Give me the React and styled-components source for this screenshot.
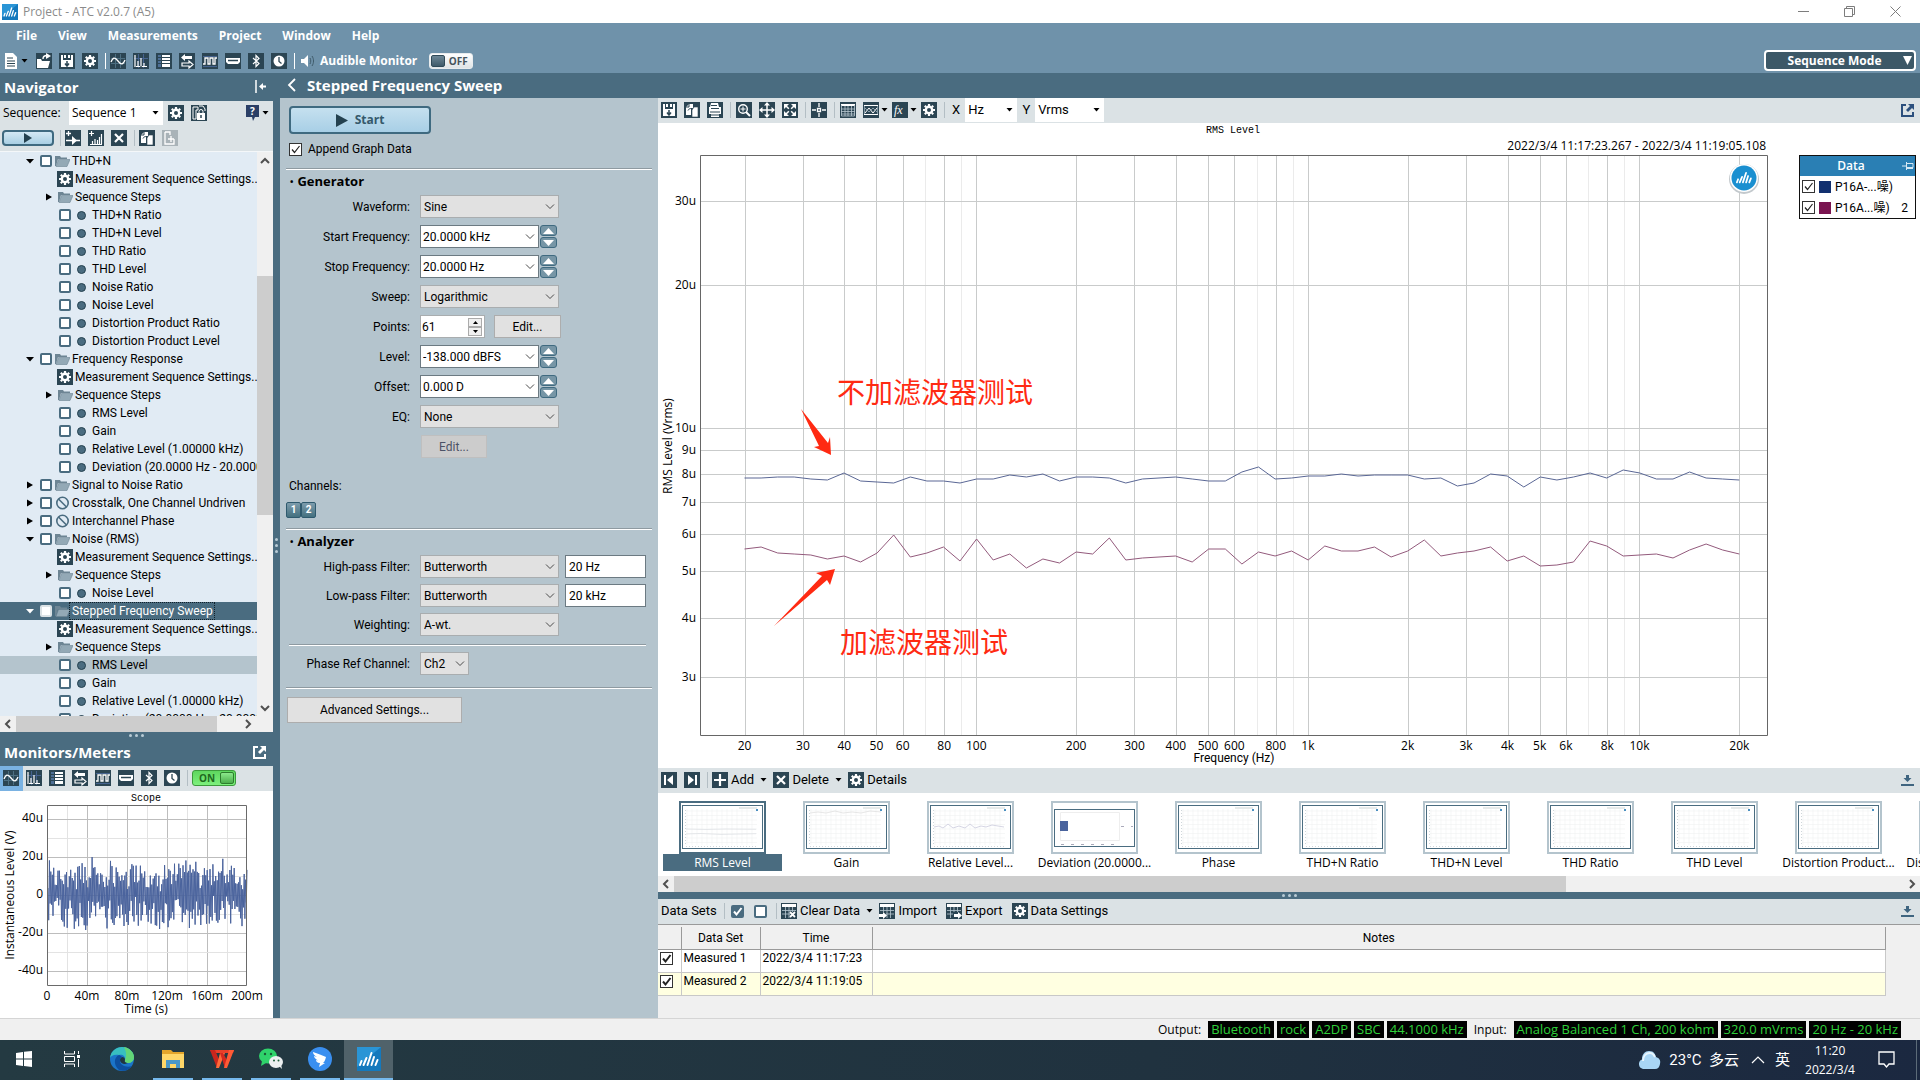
import React, { useState } from "react";
import styled, { createGlobalStyle } from "styled-components";

const GlobalStyle = createGlobalStyle`
  * {
    box-sizing: border-box;
  }
  body {
    margin: 0;
    background: #f0f0f0;
    color: #000;
    font-family: "Open Sans", "Noto Sans CJK SC", sans-serif;
    font-size: 12px;
    line-height: 16px;
  }
  button, input, select {
    font: inherit;
    color: inherit;
    margin: 0;
    padding: 0;
    border: 0;
    border-radius: 0;
    background: none;
  }
`;

const narrow = `Roboto, "Noto Sans CJK SC", sans-serif`;

/* ---------- data ---------- */

const settings = { kind: "settings", text: "Measurement Sequence Settings.." };
const steps = { kind: "steps", text: "Sequence Steps" };
const item = (text, extra) => ({ kind: "item", text, ...extra });
const group = (text, extra) => ({ kind: "group", open: true, text, ...extra });

const treeRows = [
  group("THD+N"),
  settings,
  steps,
  item("THD+N Ratio"),
  item("THD+N Level"),
  item("THD Ratio"),
  item("THD Level"),
  item("Noise Ratio"),
  item("Noise Level"),
  item("Distortion Product Ratio"),
  item("Distortion Product Level"),
  group("Frequency Response"),
  settings,
  steps,
  item("RMS Level"),
  item("Gain"),
  item("Relative Level (1.00000 kHz)"),
  item("Deviation (20.0000 Hz - 20.0000"),
  group("Signal to Noise Ratio", { open: false }),
  group("Crosstalk, One Channel Undriven", { open: false, blocked: true }),
  group("Interchannel Phase", { open: false, blocked: true }),
  group("Noise (RMS)"),
  settings,
  steps,
  item("Noise Level"),
  group("Stepped Frequency Sweep", { active: true }),
  settings,
  steps,
  item("RMS Level", { current: true }),
  item("Gain"),
  item("Relative Level (1.00000 kHz)"),
  item("Deviation (20.0000 Hz - 20.0000"),
];

const monitorIcons = [
  ["scope", "Scope"],
  ["fft", "FFT"],
  ["list", "Meters"],
  ["swap", "Signal routing"],
  ["digital", "Digital"],
  ["hdmi", "HDMI"],
  ["bluetooth", "Bluetooth"],
  ["clock", "Clock"],
];

const thumbs = [
  { text: "RMS Level", lines: true, selected: true },
  { text: "Gain", top: true },
  { text: "Relative Level...", mid: true },
  { text: "Deviation (20.0000...", bar: true },
  { text: "Phase" },
  { text: "THD+N Ratio" },
  { text: "THD+N Level" },
  { text: "THD Ratio" },
  { text: "THD Level" },
  { text: "Distortion Product..." },
  { text: "Distortion Product..." },
];

const unfiltered = [
  355, 355, 354, 354, 356, 357, 350, 358, 359, 360, 354, 358, 358, 360, 356, 356,
  352, 354, 351, 358, 354, 354, 355, 360, 356, 355, 354, 356, 358, 358, 349, 344,
  356, 355, 353, 353, 351, 353, 352, 352, 352, 356, 355, 363, 360, 351, 353, 364,
  354, 357, 354, 350, 355, 347, 350, 356, 356, 349, 355, 356, 357,
];
const filtered = [
  426, 424, 430, 431, 432, 436, 433, 439, 430, 412, 434, 430, 424, 438, 416, 437,
  431, 445, 436, 440, 429, 431, 415, 437, 435, 434, 433, 439, 426, 426, 441, 429,
  433, 428, 437, 423, 428, 428, 424, 434, 428, 417, 433, 430, 428, 424, 438, 433,
  443, 442, 439, 418, 423, 433, 432, 431, 435, 427, 421, 427, 431,
];

/* ---------- icons ---------- */

const S = (props) => (
  <g fill="none" stroke="#fff" strokeWidth="1.4" {...props} />
);

const glyphs = {
  file: (
    <>
      <path d="M2 0h8l4 4v12H2z" fill="#fff" />
      <path d="M4 5h6M4 8h8M4 10.500h8M4 13h8" stroke="#2b4553" />
    </>
  ),
  open: (
    <>
      <path d="M1 6h4l1 2h8l-2 7H1z" fill="#fff" />
      <S>
        <path d="M7 6c0-2 1-3.500 4-3.500" />
      </S>
      <path d="M10 0l5 3-5 3z" fill="#fff" />
    </>
  ),
  save: (
    <>
      <path d="M2 2h2v5h8V2h2v12H2z" fill="#fff" />
      <path d="M5 2h2v3H5zM9 2h2v3H9z" fill="#fff" />
      <path d="M8 8v4M6 10.500l2 2.500 2-2.500" stroke="#2b4553" strokeWidth="1.500" fill="none" />
    </>
  ),
  gear: (
    <>
      <circle cx="8" cy="8" r="3.200" fill="none" stroke="#fff" strokeWidth="2.400" />
      <path
        d="M8 2v2M8 12v2M2 8h2M12 8h2M3.800 3.800l1.400 1.400M10.800 10.800l1.400 1.400M3.800 12.200l1.400-1.400M10.800 5.200l1.400-1.400"
        stroke="#fff"
        strokeWidth="2.200"
      />
    </>
  ),
  scope: (
    <>
      <path d="M5.500 1v14M10.500 1v14M1 5.500h14M1 10.500h14" stroke="#4d6f82" />
      <S strokeWidth="1.300">
        <path d="M1 9c2-5 4-5 7-1s5 4 7-1" />
      </S>
    </>
  ),
  fft: (
    <>
      <path d="M5.500 1v14M10.500 1v14M1 5.500h14" stroke="#45638f" />
      <S strokeWidth="1.200">
        <path d="M2 2v12M3 13.500h2V8v5.500h2M8 13.500V5M9 13.500h2V10v3.500h3" />
      </S>
    </>
  ),
  list: (
    <>
      <path d="M2 2h3v2H2zM2 5h3v2H2zM2 8h3v2H2zM2 11h3v3H2z" fill="#4d6f96" />
      <path d="M6 2h8v2H6zM6 5h8v2H6zM6 8h8v2H6zM6 11h8v3H6z" fill="#fff" />
    </>
  ),
  swap: (
    <>
      <path d="M6 1v2h7v3H6v2L2 4.500z" fill="#fff" />
      <S strokeWidth="1.200">
        <path d="M3 10h7V8l4 3.500L10 15v-2H3z" />
      </S>
    </>
  ),
  digital: (
    <>
      <path d="M1 3.500h14M1 13.500h14" stroke="#45638f" />
      <S strokeWidth="1.300">
        <path d="M1 11h2V5h3v6h2V5h3v6h2V5h2" />
      </S>
    </>
  ),
  hdmi: (
    <>
      <path d="M1 5h14v4l-2 2H3L1 9z" fill="#fff" />
      <path d="M3 7.500h10" stroke="#2b4553" strokeWidth="1.500" />
    </>
  ),
  bluetooth: (
    <S strokeWidth="1.200">
      <path d="M5 5l6 5.500L8 13.500V2.500l3 3L5 11" />
    </S>
  ),
  clock: (
    <>
      <circle cx="8" cy="8" r="5.500" fill="#fff" />
      <path d="M8 4v4.500l2.500 2" stroke="#2b4553" strokeWidth="1.300" fill="none" />
    </>
  ),
  lock: (
    <>
      <path d="M2 2h5v3H5v9H2zM8 1h4l2 3v2" fill="none" stroke="#fff" />
      <path d="M6 8h8v7H6z" fill="#fff" />
      <path d="M8 8V6.500a2 2 0 014 0V8" fill="none" stroke="#fff" />
      <path d="M10 10v3" stroke="#2b4553" strokeWidth="1.500" />
    </>
  ),
  addStep: (
    <>
      <path d="M3.500 1v5M1 3.500h5M1 10.500h14" stroke="#fff" strokeWidth="1.300" />
      <path d="M7 6l5 4.500L7 15z" fill="#fff" />
    </>
  ),
  addMeter: (
    <path
      d="M3.500 1v5M1 3.500h5M2 14.500h12M4.500 14v-3M7 14V9M9.500 14v-4M11.500 14V7M13.500 14V4"
      stroke="#fff"
      strokeWidth="1.200"
    />
  ),
  close: <path d="M4 4l8 8M12 4l-8 8" stroke="#fff" strokeWidth="2.200" />,
  copy: (
    <>
      <path d="M2 5l3-3h4v4H7v7H2z" fill="#fff" />
      <path d="M8 8l2-3h4v10H8z" fill="#fff" stroke="#2b4553" strokeWidth=".6" />
      <path d="M5 2v3H2M4 8.500c1-2 2-2 4-2" fill="none" stroke="#2b4553" />
    </>
  ),
  newDoc: (
    <path d="M3 2h5v3M3 2v12h9V9M9 6v6M6 9h6" fill="none" stroke="#fff" strokeWidth="1.300" />
  ),
  print: (
    <>
      <path d="M4 1h7l1 4h2v7H2V5h1z" fill="#fff" />
      <path d="M4 6.500h8M3 10h10M4 3.500h6" stroke="#2b4553" />
      <path d="M4 11h8v4H4z" fill="#fff" />
      <path d="M3 13h10" stroke="#2b4553" />
    </>
  ),
  zoomIn: (
    <>
      <S>
        <circle cx="7" cy="7" r="4.300" />
        <path d="M10 10l4 4" strokeWidth="2" />
        <path d="M7 4.500v5M4.500 7h5" strokeWidth="1" />
      </S>
    </>
  ),
  move: (
    <>
      <path d="M8 2v12M2 8h12" stroke="#fff" strokeWidth="1.500" />
      <path d="M8 0l3 3.500H5zM8 16l3-3.500H5zM0 8l3.500-3v6zM16 8l-3.500-3v6z" fill="#fff" />
    </>
  ),
  expand: (
    <>
      <path d="M4 4l8 8M12 4l-8 8" stroke="#fff" strokeWidth="1.500" strokeDasharray="4 3.300" />
      <path d="M2 2h5L2 7zM14 2v5L9 2zM2 14V9l5 5zM14 14H9l5-5z" fill="#fff" />
    </>
  ),
  cursor: (
    <path d="M8 1v4M8 11v4M1 8h4M11 8h4M6.500 6.500h3v3h-3z" fill="none" stroke="#fff" strokeWidth="1.300" />
  ),
  table: (
    <>
      <path d="M1 2h14v2H1z" fill="#fff" />
      <path d="M1.500 3v11h13V3M5 4v10M8 4v10M11.500 4v10M1 7h14M1 9.500h14M1 12h14" fill="none" stroke="#b9c8d0" strokeWidth=".8" />
    </>
  ),
  wave: (
    <>
      <path d="M1.500 3v10M14.500 3v10" stroke="#7f96a3" />
      <path d="M1 3.500h14M1 12.500h14" stroke="#fff" />
      <path d="M2 11l4-5 4 5 4-5" fill="none" stroke="#fff" />
      <path d="M2 6l4 4 4-4 4 4" fill="none" stroke="#9fb2bc" strokeWidth=".8" />
    </>
  ),
  fx: (
    <text x="2" y="12" fill="#fff" fontSize="12" fontStyle="italic" fontFamily="Liberation Serif, serif">
      fx
    </text>
  ),
  first: (
    <>
      <path d="M4 3v10" stroke="#fff" strokeWidth="2" />
      <path d="M12 3v10L6 8z" fill="#fff" />
    </>
  ),
  last: (
    <>
      <path d="M12 3v10" stroke="#fff" strokeWidth="2" />
      <path d="M4 3v10l6-5z" fill="#fff" />
    </>
  ),
  plus: <path d="M8 2v12M2 8h12" stroke="#fff" strokeWidth="2.200" />,
  clearData: (
    <>
      <path d="M1 1h14v3H1z" fill="#fff" />
      <path d="M4.500 4v11M8 4v11M11.500 4v5M1 7.500h14M1 11h8" stroke="#b9c8d0" strokeWidth=".8" />
      <path d="M9 9l5 5M14 9l-5 5" stroke="#fff" strokeWidth="1.800" />
    </>
  ),
  importData: (
    <>
      <path d="M1 1h14v3H1z" fill="#fff" />
      <path d="M4.500 4v5M8 4v11M11.500 4v11M1 7.500h14M7 11h8" stroke="#b9c8d0" strokeWidth=".8" />
      <path d="M0 11h4V9l4 3.500L4 16v-2H0z" fill="#fff" />
    </>
  ),
  exportData: (
    <>
      <path d="M1 1h14v3H1z" fill="#fff" />
      <path d="M4.500 4v11M8 4v5M11.500 4v5M1 7.500h14M1 11h6" stroke="#b9c8d0" strokeWidth=".8" />
      <path d="M8 11h4V9l4 3.500-4 3.500v-2H8z" fill="#fff" />
    </>
  ),
};

const Tile = styled.svg`
  display: block;
  flex: none;
  width: 16px;
  height: 16px;
  background: ${(p) => (p.$plain ? "none" : p.$off ? "#a9b3b8" : "#2b4553")};
`;

const Icon = ({ name, plain, off }) => (
  <Tile viewBox="0 0 16 16" $plain={plain} $off={off} aria-hidden="true">
    {glyphs[name]}
  </Tile>
);

const CaretSvg = styled.svg`
  display: block;
  flex: none;
  width: 7px;
  height: 4px;
`;
const Caret = () => (
  <CaretSvg viewBox="0 0 7 4" aria-hidden="true">
    <path d="M.5 0h6l-3 3.500z" />
  </CaretSvg>
);

const LogoSvg = styled.svg`
  display: block;
  flex: none;
  width: ${(p) => p.$size}px;
  height: ${(p) => p.$size}px;
`;
const bars = "M3 18l1.500-4M6.500 18l3-7M10.500 18l4-12M14.500 18l2.500-8M18.500 18l2-5";
const AppLogo = ({ size }) => (
  <LogoSvg viewBox="0 0 24 24" $size={size} aria-hidden="true">
    <rect width="24" height="24" fill="#1479bd" />
    <path d="M0 0h24L0 20z" fill="#2a95d6" />
    <path d={bars} stroke="#fff" strokeWidth="2" strokeLinecap="round" />
  </LogoSvg>
);

const PopSvg = styled.svg`
  display: block;
  width: 13px;
  height: 13px;
`;
const PopOut = ({ color }) => (
  <PopSvg viewBox="0 0 13 13" aria-hidden="true">
    <path d="M5 1H1v11h11V8" fill="none" stroke={color} strokeWidth="2" />
    <path d="M7 0h6v6l-2-2-4 4-2-2 4-4z" fill={color} />
  </PopSvg>
);
const Dock = () => (
  <PopSvg viewBox="0 0 13 13" aria-hidden="true">
    <path d="M0 10h13v2H0zM5 1h3v3h2.500L6.500 8 2.500 4H5z" fill="#3f6580" />
  </PopSvg>
);

/* ---------- shared parts ---------- */

const Page = styled.div`
  display: flex;
  flex-direction: column;
  height: 100vh;
  min-width: 1280px;
  min-height: 900px;
`;

const TitleBar = styled.header`
  display: flex;
  align-items: center;
  height: 23px;
  padding: 0 2px;
  background: #fff;
  color: #8b8b8b;
`;

const TitleText = styled.h1`
  flex: 1;
  margin: 0 0 0 5px;
  font-size: 12px;
  font-weight: 400;
`;

const WindowButton = styled.button`
  display: grid;
  place-items: center;
  width: 46px;
  height: 22px;
  svg {
    width: 11px;
    height: 11px;
    fill: none;
    stroke: #7d7d7d;
  }
`;

const TopBar = styled.div`
  display: flex;
  align-items: flex-end;
  justify-content: space-between;
  background: #6f92aa;
  padding-right: 4px;
`;

const MenuRow = styled.nav`
  display: flex;
  align-items: center;
  height: 26px;
  padding-left: 16px;
  gap: 21px;
  color: #fff;
  font-weight: 700;
`;

const Toolbar = styled.div`
  display: flex;
  align-items: center;
  height: ${(p) => (p.$top ? 24 : 25)}px;
  flex: none;
  padding: 0 0 1px 3px;
  background: ${(p) => (p.$top ? "none" : "#dbe2e5")};
  font-family: ${(p) => (p.$large ? narrow : "inherit")};
  font-size: ${(p) => (p.$large ? 13 : 12)}px;
`;

const Tool = styled.button`
  display: flex;
  align-items: center;
  height: ${(p) => (p.$lit ? 25 : 16)}px;
  gap: ${(p) => (p.$text ? 3 : 2)}px;
  padding-right: ${(p) => p.$pad || 7}px;
  background: ${(p) => (p.$lit ? "#7ab2e2" : "none")};
  margin-left: ${(p) => (p.$lit ? "-3px" : 0)};
  padding-left: ${(p) => (p.$lit ? "3px" : 0)};
  margin-right: ${(p) => (p.$lit ? "3px" : 0)};
  white-space: nowrap;
`;

const Sep = styled.span`
  width: ${(p) => (p.$wide ? 6 : 5)}px;
  height: 16px;
  border-left: 1px solid ${(p) => (p.$light ? "#fff" : "#b3bec4")};
`;

const Spacer = styled.div`
  flex: 1;
`;

const PanelHead = styled.div`
  display: flex;
  align-items: center;
  flex: none;
  height: ${(p) => p.$h || 25}px;
  padding: 0 7px 1px ${(p) => p.$left || 4}px;
  gap: 11px;
  background: #4a6c80;
  color: #fff;
`;

const PanelTitle = styled.h2`
  flex: 1;
  margin: 0;
  font-size: 15px;
  font-weight: 700;
  white-space: nowrap;
`;

const Toggle = styled.button`
  display: flex;
  align-items: center;
  width: 44px;
  height: 16px;
  padding: 1px;
  border: 1px solid ${(p) => (p.$on ? "#3c9a3c" : "#e8ecee")};
  border-radius: 3px;
  flex-direction: ${(p) => (p.$on ? "row-reverse" : "row")};
  background: ${(p) =>
    p.$on ? "linear-gradient(#5ed65e, #7df07d)" : "linear-gradient(#fff, #dfe4e6)"};
  color: ${(p) => (p.$on ? "#1e6a1e" : "#46545c")};
  font-size: 10px;
  font-weight: 700;
  line-height: 12px;
  span {
    flex: 1;
  }
  i {
    width: 14px;
    height: 12px;
    border-radius: 2px;
    border: 1px solid ${(p) => (p.$on ? "#2e7d2e" : "#2f4a58")};
    background: ${(p) =>
      p.$on ? "linear-gradient(#8be88b, #4caf4c)" : "linear-gradient(#6d8797, #3f5b6a)"};
  }
`;

const ModeButton = styled.button`
  display: flex;
  align-items: center;
  width: 152px;
  height: 21px;
  margin-bottom: 2px;
  border: 2px solid #fff;
  border-radius: 4px;
  background: #3c5867;
  color: #fff;
  font-weight: 700;
  span {
    flex: 1;
  }
  svg {
    width: 9px;
    height: 9px;
    margin-right: 2px;
    fill: #fff;
  }
`;

const SelectWrap = styled.div`
  display: grid;
  align-items: center;
  width: ${(p) => p.$w || 139}px;
  height: ${(p) => (p.$flat ? 24 : 23)}px;
  background: ${(p) => (p.$flat ? "#fff" : "#e1e1e1")};
  border: ${(p) => (p.$flat ? "0" : "1px solid #a9adaf")};
  > * {
    grid-area: 1 / 1;
  }
  > svg {
    justify-self: end;
    margin-right: ${(p) => (p.$flat ? 4 : 3)}px;
    pointer-events: none;
  }
`;

const SelectBox = styled.select`
  appearance: none;
  width: 100%;
  height: 100%;
  padding-left: 3px;
  line-height: 20px;
`;

const ChevronSvg = styled.svg`
  display: block;
  flex: none;
  width: 10px;
  height: 6px;
  fill: none;
  stroke: #4a4a4a;
`;
const Chevron = () => (
  <ChevronSvg viewBox="0 0 10 6" aria-hidden="true">
    <path d="M1 .5l4 4 4-4" />
  </ChevronSvg>
);

const Select = ({ id, value, width, flat, label }) => (
  <SelectWrap $w={width} $flat={flat}>
    <SelectBox id={id} aria-label={label} defaultValue={value}>
      <option>{value}</option>
    </SelectBox>
    {flat ? <Caret /> : <Chevron />}
  </SelectWrap>
);

/* ---------- navigator ---------- */

const Main = styled.main`
  display: grid;
  grid-template-columns: 273px 7px minmax(0, 1fr);
  flex: 1;
  min-height: 0;
`;

const Side = styled.aside`
  display: flex;
  flex-direction: column;
  min-height: 0;
`;

const Splitter = styled.div`
  display: flex;
  flex: none;
  flex-direction: ${(p) => (p.$row ? "row" : "column")};
  align-items: center;
  justify-content: center;
  gap: 3px;
  min-height: 7px;
  background: #4a6c80;
  i {
    width: 3px;
    height: 3px;
    border-radius: 50%;
    background: #b9cbd5;
  }
`;
const Dots = ({ row }) => (
  <Splitter $row={row}>
    <i />
    <i />
    <i />
  </Splitter>
);

const SequenceLabel = styled.label`
  width: 66px;
`;

const RunButton = styled.button`
  display: grid;
  place-items: center;
  width: 52px;
  height: 16px;
  margin: 0 6px 0 -1px;
  border: 2px solid #3f6a80;
  border-radius: 4px;
  background: linear-gradient(#d3e8f4, #a9cfe3);
  svg {
    width: 8px;
    height: 10px;
    fill: #24414f;
  }
`;

const TreeArea = styled.div`
  display: grid;
  grid-template-columns: minmax(0, 1fr) 16px;
  flex: 1;
  min-height: 0;
  overflow: hidden;
  border-top: 1px solid #f4f7f9;
  background: #e1ebf4;
  font-family: ${narrow};
`;

const Tree = styled.ul`
  margin: 0;
  padding: 0;
  list-style: none;
  overflow: hidden;
  min-height: 0;
`;

const TreeRow = styled.li`
  display: flex;
  align-items: center;
  height: 18px;
  padding-left: ${(p) => ({ group: 26, settings: 57, steps: 45, item: 59 })[p.$kind]}px;
  background: ${(p) => (p.$active ? "#4a6c80" : p.$current ? "#b4c4cd" : "none")};
  color: ${(p) => (p.$active ? "#fff" : "#000")};
  white-space: nowrap;
  label {
    padding: 0 1px 0 2px;
    outline: ${(p) => (p.$active ? "1px dotted #10202a" : "none")};
  }
  input {
    margin-right: 3px;
  }
`;

const Box = styled.input`
  appearance: none;
  flex: none;
  width: 12px;
  height: 12px;
  border: 2px solid ${(p) => (p.$active ? "#dbe2e5" : "#4a6c80")};
  border-radius: 2px;
  background: #fff;
`;

const Twisty = styled.svg`
  flex: none;
  width: 8px;
  height: 8px;
  margin-right: ${(p) => (p.$step ? 5 : 6)}px;
  fill: ${(p) => (p.$active ? "#fff" : "#000")};
`;

const TreeGlyph = styled.svg`
  flex: none;
  width: 15px;
  height: 14px;
`;

const Dot = styled.i`
  flex: none;
  width: 9px;
  height: 9px;
  margin: 0 4px 0 3px;
  border: 1px solid #24414f;
  border-radius: 50%;
  background: #4a6c80;
`;

const PlainLabel = styled.span`
  padding-left: 2px;
`;

const Folder = () => (
  <TreeGlyph viewBox="0 0 15 14" aria-hidden="true">
    <path d="M0 2h5l1 1.500h6V5H3L1 12H0z" fill="#6d8594" />
    <path d="M3.500 5.500H15L12 12.500H1z" fill="#93a9b6" stroke="#6d8594" strokeWidth=".6" />
  </TreeGlyph>
);

const Blocked = () => (
  <TreeGlyph viewBox="0 0 15 14" aria-hidden="true">
    <circle cx="7.500" cy="7" r="5.700" fill="none" stroke="#4a6c80" strokeWidth="1.600" />
    <path d="M3.500 3l8 8" stroke="#4a6c80" strokeWidth="1.600" />
  </TreeGlyph>
);

const TwistyIcon = ({ open, active, step }) => (
  <Twisty viewBox="0 0 8 8" $active={active} $step={step} aria-hidden="true">
    <path d={open ? "M0 2h8L4 6.500z" : "M1 0.500l6 3.500-6 3.500z"} />
  </Twisty>
);

function TreeLine({ row, id }) {
  const { kind, text, open, active, current, blocked } = row;
  return (
    <TreeRow $kind={kind} $active={active} $current={current}>
      {kind === "group" && (
        <>
          <TwistyIcon open={open} active={active} />
          <Box type="checkbox" id={id} $active={active} />
          {blocked ? <Blocked /> : <Folder />}
          <label htmlFor={id}>{text}</label>
        </>
      )}
      {kind === "settings" && (
        <>
          <Icon name="gear" />
          <PlainLabel>{text}</PlainLabel>
        </>
      )}
      {kind === "steps" && (
        <>
          <TwistyIcon step />
          <Folder />
          <PlainLabel>{text}</PlainLabel>
        </>
      )}
      {kind === "item" && (
        <>
          <Box type="checkbox" id={id} />
          <Dot />
          <label htmlFor={id}>{text}</label>
        </>
      )}
    </TreeRow>
  );
}

const ScrollTrack = styled.div`
  display: flex;
  flex: none;
  flex-direction: ${(p) => (p.$row ? "row" : "column")};
  align-items: center;
  background: #f0f0f0;
  ${(p) => (p.$row ? "height: 16px;" : "width: 16px;")}
`;

const ScrollButton = styled.button`
  display: grid;
  place-items: center;
  flex: none;
  width: 16px;
  height: 17px;
  svg {
    width: 10px;
    height: 10px;
    fill: none;
    stroke: #505050;
    stroke-width: 2;
  }
`;

const ScrollThumb = styled.div`
  flex: ${(p) => p.$size} 0 0;
  align-self: stretch;
  background: #cdcdcd;
`;

const ScrollGap = styled.div`
  flex: ${(p) => p.$size} 0 0;
`;

const ScrollCorner = styled.div`
  width: 17px;
`;

const arrows = {
  up: "M1 7l4-4 4 4",
  down: "M1 3l4 4 4-4",
  left: "M7 1L3 5l4 4",
  right: "M3 1l4 4-4 4",
};
const Arrow = ({ dir }) => (
  <ScrollButton aria-label={`Scroll ${dir}`}>
    <svg viewBox="0 0 10 10">
      <path d={arrows[dir]} />
    </svg>
  </ScrollButton>
);

const ScopeSvg = styled.svg`
  display: block;
  flex: none;
  width: 100%;
  background: #fff;
`;

// small repeatable noise source for the scope trace
function noisePath() {
  let seed = 29;
  const next = () => {
    seed = (seed * 16807) % 2147483647;
    return seed / 2147483647;
  };
  const pts = [];
  for (let i = 0; i <= 280; i++) {
    const up = i % 2 === 0;
    const drift = Math.sin(i / 9) * 3 + Math.sin(i / 2.3) * 3;
    const level = up ? 7 + next() * 27 + drift : -(4 + next() * 28 - drift);
    pts.push(`${(48 + (i * 199) / 280).toFixed(1)} ${(104 - level).toFixed(1)}`);
  }
  return "M" + pts.join("L");
}

function Scope() {
  return (
    <ScopeSvg viewBox="0 0 273 227" fontSize="12" role="img" aria-label="Scope">
      <text x="146" y="10" textAnchor="middle" fontSize="10" fontFamily="Liberation Mono, monospace">
        Scope
      </text>
      {[0, 1, 2, 3, 4, 5, 6, 7, 8, 9].map((i) => (
        <path key={i} d={`M${47.5 + i * 20} 15V194`} stroke={i % 2 ? "#e3e3e3" : "#bdbdbd"} />
      ))}
      {[-4, -3, -2, -1, 0, 1, 2, 3, 4].map((i) => (
        <path key={i} d={`M48 ${104.500 - i * 19}H247`} stroke={i % 2 ? "#e3e3e3" : "#bdbdbd"} />
      ))}
      <path d={noisePath()} fill="none" stroke="#4a639d" />
      <path d="M47.500 14.500h199v180h-199z" fill="none" stroke="#6a6a6a" />
      {["40u", "20u", "0", "-20u", "-40u"].map((t, i) => (
        <text key={t} x="43" y={31 + i * 38} textAnchor="end">
          {t}
        </text>
      ))}
      {["0", "40m", "80m", "120m", "160m", "200m"].map((t, i) => (
        <text key={t} x={47 + i * 40} y="209" textAnchor="middle">
          {t}
        </text>
      ))}
      <text x="146" y="222" textAnchor="middle">
        Time (s)
      </text>
      <text transform="translate(14 104) rotate(-90)" textAnchor="middle">
        Instantaneous Level (V)
      </text>
    </ScopeSvg>
  );
}

/* ---------- sweep settings ---------- */

const Work = styled.section`
  display: flex;
  flex-direction: column;
  min-width: 0;
  min-height: 0;
`;

const Columns = styled.div`
  display: grid;
  grid-template-columns: 378px minmax(0, 1fr);
  flex: 1;
  min-height: 0;
`;

const Config = styled.form`
  display: flex;
  flex-direction: column;
  align-items: flex-start;
  min-height: 0;
  overflow: hidden;
  padding: 8px 6px;
  background: #b4c4cd;
  font-family: ${narrow};
`;

const StartButton = styled.button`
  display: flex;
  align-items: center;
  justify-content: center;
  gap: 7px;
  width: 142px;
  height: 28px;
  margin-left: 3px;
  border: 2px solid #3f6a80;
  border-radius: 4px;
  background: linear-gradient(#c5e0ef, #a8cfe6);
  color: #35596b;
  font-family: "Open Sans", sans-serif;
  font-weight: 700;
  svg {
    width: 12px;
    height: 13px;
    fill: #24414f;
  }
`;

const CheckLine = styled.label`
  display: flex;
  align-items: center;
  gap: 6px;
  margin: 7px 0 11px 3px;
`;

const TickWrap = styled.span`
  display: inline-grid;
  flex: none;
  width: 13px;
  height: 13px;
  > * {
    grid-area: 1 / 1;
  }
  svg {
    width: 13px;
    height: 13px;
    pointer-events: none;
    fill: none;
    stroke: ${(p) => p.$mark || "#222"};
    stroke-width: ${(p) => (p.$bold ? 2 : 1.2)};
  }
`;

const TickInput = styled.input`
  appearance: none;
  width: 13px;
  height: 13px;
  border: ${(p) => (p.$blue ? 2 : 1)}px solid ${(p) => (p.$blue ? "#4a6c80" : "#333")};
  border-radius: ${(p) => (p.$blue ? 2 : 0)}px;
  background: ${(p) => (p.$blue && p.checked ? "#4a6c80" : "#fff")};
`;

function Tick({ label, initial = true, bold, blue }) {
  const [on, setOn] = useState(initial);
  return (
    <TickWrap $bold={bold || blue} $mark={blue ? "#fff" : "#222"}>
      <TickInput
        type="checkbox"
        aria-label={label}
        checked={on}
        $blue={blue}
        onChange={() => setOn(!on)}
      />
      {on && (
        <svg viewBox="0 0 13 13">
          <path d="M3 6.500l2.500 3L10.500 3" />
        </svg>
      )}
    </TickWrap>
  );
}

const Divider = styled.hr`
  align-self: stretch;
  height: 2px;
  margin: 0;
  border: 0;
  border-top: 1px solid #8e9aa1;
  background: #fff;
`;

const InsetDivider = styled(Divider)`
  margin: 8px 6px 6px 3px;
`;

const PhaseDivider = styled(Divider)`
  margin: 12px 0 8px;
`;

const SectionTitle = styled.h3`
  margin: 3px 0 5px 4px;
  font-family: "Open Sans", sans-serif;
  font-size: 13px;
  line-height: 16px;
  font-weight: 700;
  &::before {
    content: "•";
    margin-right: 4px;
    font-size: 9px;
    vertical-align: 1px;
  }
`;

const Fields = styled.div`
  display: flex;
  flex-direction: column;
  gap: ${(p) => (p.$tight ? 6 : 7)}px;
`;

const Field = styled.div`
  display: flex;
  align-items: center;
  label {
    width: 124px;
    margin-right: 10px;
    text-align: right;
  }
`;

const Combo = styled.div`
  display: flex;
  align-items: center;
  width: 119px;
  height: 23px;
  border: 1px solid #6c7a82;
  background: #fff;
  input {
    flex: 1;
    min-width: 0;
    padding-left: 2px;
  }
  button {
    padding: 0 3px;
  }
`;

const Spin = styled.div`
  display: flex;
  flex-direction: column;
  gap: 1px;
  margin-left: 1px;
  button {
    display: grid;
    place-items: center;
    width: 17px;
    height: 11px;
    border: 1px solid #3f6a80;
    border-radius: 3px;
    background: #7796a6;
  }
  svg {
    width: 11px;
    height: 6px;
    fill: #fff;
  }
`;

const NumberBox = styled.div`
  display: flex;
  align-items: center;
  width: 65px;
  height: 23px;
  margin-right: 9px;
  border: 1px solid #a9adaf;
  background: #fff;
  input {
    width: 47px;
    padding-left: 1px;
  }
  div {
    display: flex;
    flex-direction: column;
  }
  button {
    display: grid;
    place-items: center;
    width: 14px;
    height: 9px;
    border: 1px solid #ababab;
    background: #f0f0f0;
  }
  svg {
    width: 5px;
    height: 3px;
  }
`;

const PlainButton = styled.button`
  width: ${(p) => p.$w || 67}px;
  height: ${(p) => p.$h || 23}px;
  border: 1px solid #adadad;
  background: #e1e1e1;
  margin-left: ${(p) => p.$indent || 0}px;
  &:disabled {
    border-color: #bfbfbf;
    background: #ccc;
    color: #4c5266;
  }
`;

const TextBox = styled.input`
  width: 81px;
  height: 23px;
  margin-left: 6px;
  padding-left: 3px;
  border: 1px solid #6c7a82;
  background: #fff;
`;

const ChannelsLabel = styled.div`
  margin: 20px 0 8px 3px;
`;

const Channels = styled.div`
  display: flex;
  margin-bottom: 10px;
  button {
    width: 15px;
    height: 16px;
    border: 1px solid #2f5a6e;
    border-radius: 2px;
    background: linear-gradient(#7d9cac, #44707f);
    color: #fff;
    font-size: 10px;
    line-height: 12px;
    font-weight: 700;
  }
`;

function ComboField({ id, label, value }) {
  return (
    <Field>
      <label htmlFor={id}>{label}</label>
      <Combo>
        <input id={id} defaultValue={value} />
        <button type="button" aria-label={`${label} presets`}>
          <Chevron />
        </button>
      </Combo>
      <Spin>
        <button type="button" aria-label="Increase">
          <svg viewBox="0 0 11 6">
            <path d="M0 6h11L5.500 0z" />
          </svg>
        </button>
        <button type="button" aria-label="Decrease">
          <svg viewBox="0 0 11 6">
            <path d="M0 0h11L5.500 6z" />
          </svg>
        </button>
      </Spin>
    </Field>
  );
}

function SelectField({ id, label, value, width, children }) {
  return (
    <Field>
      <label htmlFor={id}>{label}</label>
      <Select id={id} value={value} width={width} />
      {children}
    </Field>
  );
}

function SweepForm() {
  return (
    <Config onSubmit={(e) => e.preventDefault()}>
      <StartButton>
        <svg viewBox="0 0 12 13">
          <path d="M0 0l12 6.500L0 13z" />
        </svg>
        Start
      </StartButton>
      <CheckLine>
        <Tick label="Append Graph Data" />
        Append Graph Data
      </CheckLine>
      <Divider />
      <SectionTitle>Generator</SectionTitle>
      <Fields>
        <SelectField id="waveform" label="Waveform:" value="Sine" />
        <ComboField id="start" label="Start Frequency:" value="20.0000 kHz" />
        <ComboField id="stop" label="Stop Frequency:" value="20.0000 Hz" />
        <SelectField id="sweep" label="Sweep:" value="Logarithmic" />
        <Field>
          <label htmlFor="points">Points:</label>
          <NumberBox>
            <input id="points" defaultValue="61" />
            <div>
              <button type="button" aria-label="More points">
                <svg viewBox="0 0 5 3">
                  <path d="M0 3h5L2.500 0z" />
                </svg>
              </button>
              <button type="button" aria-label="Fewer points">
                <svg viewBox="0 0 5 3">
                  <path d="M0 0h5L2.500 3z" />
                </svg>
              </button>
            </div>
          </NumberBox>
          <PlainButton type="button">Edit...</PlainButton>
        </Field>
        <ComboField id="level" label="Level:" value="-138.000 dBFS" />
        <ComboField id="offset" label="Offset:" value="0.000 D" />
        <SelectField id="eq" label="EQ:" value="None" />
        <PlainButton type="button" disabled $w={66} $indent={135}>
          Edit...
        </PlainButton>
      </Fields>
      <ChannelsLabel>Channels:</ChannelsLabel>
      <Channels>
        <button type="button">1</button>
        <button type="button">2</button>
      </Channels>
      <Divider />
      <SectionTitle>Analyzer</SectionTitle>
      <Fields $tight>
        <SelectField id="highpass" label="High-pass Filter:" value="Butterworth">
          <TextBox aria-label="High-pass frequency" defaultValue="20 Hz" />
        </SelectField>
        <SelectField id="lowpass" label="Low-pass Filter:" value="Butterworth">
          <TextBox aria-label="Low-pass frequency" defaultValue="20 kHz" />
        </SelectField>
        <SelectField id="weighting" label="Weighting:" value="A-wt." />
      </Fields>
      <InsetDivider />
      <SelectField id="phase" label="Phase Ref Channel:" value="Ch2" width={49} />
      <PhaseDivider />
      <PlainButton type="button" $w={175} $h={26} $indent={1}>
        Advanced Settings...
      </PlainButton>
    </Config>
  );
}

/* ---------- graph ---------- */

const Results = styled.div`
  display: flex;
  flex-direction: column;
  min-width: 0;
  min-height: 0;
`;

const AxisName = styled.span`
  padding: 0 5px 0 2px;
`;

const EndButton = styled.button`
  margin-right: 6px;
`;

const GraphArea = styled.div`
  display: grid;
  grid-template-columns: minmax(0, 1132fr) 130px;
  flex: 1;
  min-height: 0;
  background: #fff;
`;

const GraphSvg = styled.svg`
  display: block;
  width: 100%;
  height: 100%;
  min-height: 0;
`;

const Legend = styled.div`
  align-self: start;
  width: 117px;
  margin: 32px 0 0 9px;
  border: 1px solid #111;
`;

const LegendHead = styled.div`
  display: grid;
  grid-template-columns: 1fr auto;
  align-items: center;
  height: 20px;
  padding: 0 1px 0 0;
  background: #2a7fb4;
  color: #fff;
  font-weight: 600;
  text-align: center;
  svg {
    width: 12px;
    height: 8px;
    fill: none;
    stroke: #d5e8f4;
  }
`;

const LegendRow = styled.div`
  display: flex;
  align-items: center;
  height: 21px;
  padding: 0 7px 0 2px;
  gap: 4px;
  white-space: nowrap;
  font-family: ${narrow};
  i {
    width: 12px;
    height: 12px;
    background: ${(p) => p.$color};
  }
  b {
    flex: 1;
    font-weight: 400;
  }
`;

const DECADE = 331.6;
const xOf = (hz) => 86.5 + DECADE * Math.log10(hz / 20);
const yOf = (uv) => 305 - 207 * Math.log(uv / 10);
const traceOf = (ys) =>
  "M" + ys.map((y, i) => `${(86.5 + (i * DECADE) / 20).toFixed(1)} ${y}`).join("L");

const xTicks = [
  [20, "20"], [30, "30"], [40, "40"], [50, "50"], [60, "60"], [70], [80, "80"], [90],
  [100, "100"], [200, "200"], [300, "300"], [400, "400"], [500, "500"], [600, "600"],
  [700], [800, "800"], [900], [1000, "1k"], [2000, "2k"], [3000, "3k"], [4000, "4k"],
  [5000, "5k"], [6000, "6k"], [7000], [8000, "8k"], [9000], [10000, "10k"], [20000, "20k"],
];
const yTicks = [30, 20, 10, 9, 8, 7, 6, 5, 4, 3];

function Graph() {
  return (
    <GraphSvg viewBox="0 0 1132 645" fontSize="12" role="img" aria-label="RMS Level">
      <text x="575" y="10" textAnchor="middle" fontSize="10" fontFamily="Liberation Mono, monospace">
        RMS Level
      </text>
      <text x="1108" y="27" textAnchor="end">
        2022/3/4 11:17:23.267 - 2022/3/4 11:19:05.108
      </text>
      {xTicks.map(([hz, text]) => (
        <g key={hz}>
          <path d={`M${Math.round(xOf(hz)) + 0.5} 33V612`} stroke={text ? "#c9cbcb" : "#ebebeb"} />
          {text && (
            <text x={xOf(hz)} y="627" textAnchor="middle">
              {text}
            </text>
          )}
        </g>
      ))}
      {yTicks.map((uv) => (
        <g key={uv}>
          <path d={`M42 ${Math.round(yOf(uv)) + 0.5}H1110`} stroke="#c9cbcb" />
          <text x="38" y={Math.round(yOf(uv)) + 4} textAnchor="end">
            {uv}u
          </text>
        </g>
      ))}
      <path d="M42.500 32.500h1067v580h-1067z" fill="none" stroke="#666" />
      <path d={traceOf(unfiltered)} fill="none" stroke="#5a6795" />
      <path d={traceOf(filtered)} fill="none" stroke="#935a7c" />
      <text x="576" y="639" textAnchor="middle" fontFamily={narrow}>
        Frequency (Hz)
      </text>
      <text transform="translate(14 323) rotate(-90)" textAnchor="middle">
        RMS Level (Vrms)
      </text>
      <g fill="#ff2a12" fontSize="28">
        <text x="179" y="280">
          不加滤波器测试
        </text>
        <text x="182" y="530">
          加滤波器测试
        </text>
        <path d="M143 286l27 34 2-6 1 18-17-8 5-1z" />
        <path d="M116 503l48-50-6-3 19-4-5 16-3-5z" />
      </g>
      <circle cx="1086" cy="56" r="15" fill="#c3c9cd" />
      <circle cx="1086" cy="55" r="14" fill="#fff" />
      <circle cx="1086" cy="55" r="12.500" fill="#1a8fd0" />
      <g transform="translate(1076.500 45) scale(.8)">
        <path d={bars} stroke="#fff" strokeWidth="2.200" strokeLinecap="round" />
      </g>
    </GraphSvg>
  );
}

/* ---------- thumbnails and data sets ---------- */

const Strip = styled.div`
  display: flex;
  flex: none;
  gap: 5px;
  height: 83px;
  padding: 8px 0 0 5px;
  overflow: hidden;
  background: #fff;
`;

const Thumb = styled.button`
  display: flex;
  flex-direction: column;
  flex: none;
  align-items: center;
  width: 119px;
  span {
    width: 100%;
    height: 17px;
    background: ${(p) => (p.$selected ? "#4a6c80" : "none")};
    color: ${(p) => (p.$selected ? "#fff" : "#000")};
    line-height: 18px;
  }
  svg {
    width: 87px;
    height: 53px;
    border: 2px solid ${(p) => (p.$selected ? "#4a6c80" : "#b4c4cd")};
  }
`;

const gridLines = Array.from({ length: 14 }, (_, i) => `M${6 + i * 5} 6V42`).join("");
const gridRows = Array.from({ length: 8 }, (_, i) => `M5 ${8 + i * 4.500}H76`).join("");

const ThumbGraph = ({ thumb }) => (
  <svg viewBox="0 0 83 49" aria-hidden="true">
    <rect x="1.500" y={thumb.bar ? 6.5 : 2.5} width="80" height={thumb.bar ? 37 : 43} fill="#fff" stroke="#4a6c80" />
    {thumb.bar ? (
      <>
        <path d="M7.500 9.500h59v28h-59z" fill="none" stroke="#eee" />
        <rect x="7" y="18" width="8" height="10" fill="#4a639d" />
        <path d="M68 23.500h12M8 41.500h60" stroke="#aab" strokeDasharray="3 7" />
      </>
    ) : (
      <>
        <path d={gridLines + gridRows} stroke="#f0f1f2" strokeWidth=".6" />
        <path d="M5 43.500h70M4.500 7v35" stroke="#b9c3c9" strokeDasharray="1 2" strokeWidth=".7" />
        <path d="M58 5h18" stroke="#9aa" strokeWidth=".5" />
        <rect x="75" y="6" width="2" height="2" fill="#4a8fc0" />
        {thumb.lines && <path d="M5 26l20 .5 20-.5 30 .3M5 31l15-.5 20 1 35-.8" fill="none" stroke="#dcdfe4" strokeWidth=".7" />}
        {thumb.top && <path d="M5 10l8-1 8 1 9-2 8 2 9-1 9 1 9-2 11 1" fill="none" stroke="#ddd" strokeWidth=".7" />}
        {thumb.mid && <path d="M5 24l5-1 4 2 5-4 5 4 6-2 6 2 5-4 5 4 6-2 5 1 6-2 12 2" fill="none" stroke="#ccd" strokeWidth=".8" />}
      </>
    )}
  </svg>
);

const DataArea = styled.div`
  flex: none;
  height: 94px;
  padding: 2px 34px 0 0;
  border-top: 1px solid #9a9a9a;
  background: #f0f0f0;
  font-family: ${narrow};
`;

const DataTable = styled.table`
  width: 100%;
  border-collapse: collapse;
  table-layout: fixed;
  th {
    height: 22px;
    padding: 0;
    border-right: 1px solid #9a9a9a;
    border-bottom: 1px solid #9a9a9a;
    font-weight: 400;
  }
  td {
    height: 23px;
    padding: 0 2px 6px;
    border-right: 1px solid #c8c8c8;
    border-bottom: 1px solid #c8c8c8;
    white-space: nowrap;
  }
  td > span {
    vertical-align: middle;
  }
`;

const DataRow = styled.tr`
  background: ${(p) => (p.$tint ? "#ffffe1" : "#fff")};
`;

const DataSetsLabel = styled.span`
  width: 63px;
`;

const TickPair = styled.div`
  display: flex;
  gap: 10px;
  margin: 0 9px 0 2px;
`;

/* ---------- top bar, status bar and taskbar ---------- */

const AudibleLabel = styled.span`
  display: flex;
  align-items: center;
  gap: 5px;
  margin: 0 12px 0 2px;
  color: #fff;
  font-weight: 700;
  svg {
    width: 14px;
    height: 14px;
  }
`;

const NavTools = styled.div`
  display: flex;
  margin-left: 5px;
`;

const StatusBar = styled.footer`
  display: flex;
  align-items: center;
  justify-content: flex-end;
  flex: none;
  height: 22px;
  gap: 3px;
  padding-right: 19px;
  border-top: 1px solid #d5d5d5;
  background: #f0f0f0;
  font-size: 13px;
`;

const StatusLabel = styled.span`
  padding: 0 4px;
  font-size: 12px;
`;

const Tag = styled.span`
  height: 17px;
  padding: 0 3px;
  background: #000;
  color: #2fd03a;
`;

const Taskbar = styled.div`
  display: flex;
  align-items: stretch;
  flex: none;
  height: 40px;
  padding-right: 3px;
  background: linear-gradient(90deg, #243a42, #20323f 60%, #1b2840);
  color: #fff;
`;

const Task = styled.button`
  display: grid;
  grid-template-rows: 38px 2px;
  place-items: center;
  width: ${(p) => p.$w || 49}px;
  background: ${(p) => (p.$active ? "#50626a" : "none")};
  svg {
    width: 24px;
    height: 24px;
  }
  i {
    width: ${(p) => (p.$active ? "100%" : "40px")};
    height: 2px;
    background: ${(p) => (p.$running ? "#76b9ed" : "none")};
  }
`;

const Tray = styled.div`
  display: flex;
  align-items: center;
  font-family: ${narrow};
  font-size: 15px;
  gap: 8px;
  svg {
    display: block;
  }
`;

const Clock = styled.div`
  width: 60px;
  margin: 0 10px 0 2px;
  font-family: "Open Sans", sans-serif;
  font-size: 12px;
  line-height: 19px;
  text-align: center;
`;

const ShowDesktop = styled.button`
  width: 22px;
  border-right: 1px solid #5c6b78;
`;

const taskIcons = {
  windows: (
    <svg viewBox="0 0 24 24">
      <path d="M4 6l7-1v6.500H4zM12 4.800L20 4v7.500h-8zM4 12.500h7V19l-7-1zM12 12.500h8V20l-8-.9z" fill="#fff" />
    </svg>
  ),
  view: (
    <svg viewBox="0 0 24 24" fill="none" stroke="#fff">
      <path d="M4.500 4v3h10V4M4.500 20v-3h10v3M4.500 9.500h10v5h-10zM18.500 4v3M18.500 12v8" />
      <path d="M17 8h3v3h-3z" fill="#fff" stroke="none" />
    </svg>
  ),
  edge: (
    <svg viewBox="0 0 24 24">
      <circle cx="12" cy="12" r="12" fill="#1b74c8" />
      <path d="M0 11C1 4 6 0 12 0c7 0 12 5 12 10 0 4-3 6-6 6-2 0-4-1-3-3 1-4-3-6-6-5C4 7 1 9 0 11z" fill="#38bfc0" />
      <path d="M14 0c6 1 10 6 10 10 0 4-3 6-6 6-2 0-4-1-3-3 2-5 1-9-1-13z" fill="#63d576" />
      <path d="M9 8c-5 2-6 10 0 15 5 2 10 0 13-4-6 2-12-1-12-5 0-2 1-3 2-4-1-1-2-2-3-2z" fill="#0d4f9e" />
      <path d="M12 10c2 0 3 1 3 3-1 2 1 3 3 3l-3 1c-3 0-5-2-5-4 0-1 1-2 2-3z" fill="#21363f" />
    </svg>
  ),
  folder: (
    <svg viewBox="0 0 24 24">
      <path d="M1 3h9l2 2h11v16H1z" fill="#e3a52b" />
      <path d="M1 7h22v14H1z" fill="#ffd768" />
      <path d="M5 21v-8h14v8h-4v-4H9v4z" fill="#4a98c9" />
    </svg>
  ),
  wps: (
    <svg viewBox="0 0 24 24">
      <path d="M0 3h24l-1 3H2z" fill="#e8402a" />
      <path d="M0 3h5l5 12-3 6z" fill="#c9261d" />
      <path d="M10 6h5L9 21H6z" fill="#ff6b3a" />
      <path d="M10 6h3l5 9-3 6z" fill="#d5281f" />
      <path d="M19 3h5l-7 18h-3z" fill="#ff5a35" />
    </svg>
  ),
  wechat: (
    <svg viewBox="0 0 24 24">
      <ellipse cx="9" cy="9" rx="9" ry="7.500" fill="#2fd36b" />
      <path d="M3 14l-1 5 5-3z" fill="#2fd36b" />
      <ellipse cx="17" cy="15" rx="7" ry="6" fill="#eceff0" />
      <path d="M20 19l3 3-1-5z" fill="#eceff0" />
      <g fill="#1b5b36">
        <circle cx="6" cy="7" r="1.200" />
        <circle cx="12" cy="7" r="1.200" />
        <circle cx="15" cy="13.500" r="1" />
        <circle cx="19.500" cy="13.500" r="1" />
      </g>
    </svg>
  ),
  bird: (
    <svg viewBox="0 0 24 24">
      <circle cx="12" cy="12" r="12" fill="#3a8ff0" />
      <path d="M5 5c5 2 9 3 13 5-1 4-2 5-3 6h2l-6 4 1-4c-3 0-4-2-4-3l2 .5C7 12 6 10 6 9l3 1C6 8 5 7 5 5z" fill="#fff" />
    </svg>
  ),
  app: <AppLogo size={24} />,
};

const tasks = [
  { name: "windows", label: "Start menu", width: 48 },
  { name: "view", label: "Task view", width: 48 },
  { name: "edge", label: "Edge", width: 52 },
  { name: "folder", label: "Files", running: true },
  { name: "wps", label: "WPS", running: true },
  { name: "wechat", label: "WeChat", running: true },
  { name: "bird", label: "DingTalk", running: true },
  { name: "app", label: "ATC", running: true, active: true },
];

export default function App() {
  const [monitor, setMonitor] = useState(true);
  const [audible, setAudible] = useState(false);

  return (
    <Page>
      <GlobalStyle />
      <TitleBar>
        <AppLogo size={16} />
        <TitleText>Project - ATC v2.0.7 (A5)</TitleText>
        <WindowButton aria-label="Minimize">
          <svg viewBox="0 0 11 11">
            <path d="M0 5.500h11" />
          </svg>
        </WindowButton>
        <WindowButton aria-label="Restore">
          <svg viewBox="0 0 11 11">
            <path d="M.5 2.500h8v8h-8zM2.500 2.500v-2h8v8h-2" />
          </svg>
        </WindowButton>
        <WindowButton aria-label="Close">
          <svg viewBox="0 0 11 11">
            <path d="M.5 .5l10 10M10.500 .5l-10 10" />
          </svg>
        </WindowButton>
      </TitleBar>

      <TopBar>
        <div>
          <MenuRow>
            {["File", "View", "Measurements", "Project", "Window", "Help"].map((m) => (
              <button key={m}>{m}</button>
            ))}
          </MenuRow>
          <Toolbar $top>
            <Tool aria-label="New project" $pad={8}>
              <Icon name="file" plain />
              <Caret />
            </Tool>
            {["open", "save", "gear"].map((n) => (
              <Tool key={n} aria-label={n}>
                <Icon name={n} />
              </Tool>
            ))}
            <Sep $light />
            {monitorIcons.map(([n, label]) => (
              <Tool key={n} aria-label={label}>
                <Icon name={n} />
              </Tool>
            ))}
            <Sep $light />
            <AudibleLabel>
              <svg viewBox="0 0 14 14">
                <path d="M0 5h3l4-4v12L3 9H0z" fill="#fff" />
                <path d="M9 4c1 2 1 4 0 6M11 2c2 3 2 7 0 10" fill="none" stroke="#3f5b6a" />
              </svg>
              Audible Monitor
            </AudibleLabel>
            <Toggle $on={audible} aria-label="Audible Monitor" onClick={() => setAudible(!audible)}>
              <i />
              <span>{audible ? "ON" : "OFF"}</span>
            </Toggle>
          </Toolbar>
        </div>
        <ModeButton>
          <span>Sequence Mode</span>
          <svg viewBox="0 0 9 9">
            <path d="M0 0h9L4.500 9z" />
          </svg>
        </ModeButton>
      </TopBar>

      <Main>
        <Side>
          <PanelHead $h={28}>
            <PanelTitle>Navigator</PanelTitle>
            <svg width="11" height="13" viewBox="0 0 11 13">
              <path d="M1 0v13" stroke="#fff" strokeWidth="1.500" />
              <path d="M4 6.500l4-3.500v2.500h3v2H8V10z" fill="#fff" />
            </svg>
          </PanelHead>
          <Toolbar>
            <SequenceLabel htmlFor="sequence">Sequence:</SequenceLabel>
            <Select id="sequence" value="Sequence 1" width={94} flat />
            <NavTools>
              <Tool aria-label="Sequence settings">
                <Icon name="gear" />
              </Tool>
              <Tool aria-label="Lock sequence">
                <Icon name="lock" />
              </Tool>
            </NavTools>
            <Spacer />
            <Tool aria-label="Help" $pad={4}>
              <svg width="15" height="16" viewBox="0 0 15 16">
                <path d="M1 0h13v12h-4l-2 4-1-4H1z" fill="#2b3f66" />
                <text x="7.500" y="10" textAnchor="middle" fill="#fff" fontSize="10" fontWeight="700">
                  ?
                </text>
              </svg>
              <Caret />
            </Tool>
          </Toolbar>
          <Toolbar>
            <RunButton aria-label="Run sequence">
              <svg viewBox="0 0 8 10">
                <path d="M0 0l8 5-8 5z" />
              </svg>
            </RunButton>
            <Sep />
            {["addStep", "addMeter", "close"].map((n) => (
              <Tool key={n} aria-label={n}>
                <Icon name={n} />
              </Tool>
            ))}
            <Sep />
            <Tool aria-label="Copy">
              <Icon name="copy" />
            </Tool>
            <Tool aria-label="New step" disabled>
              <Icon name="newDoc" off />
            </Tool>
          </Toolbar>
          <TreeArea>
            <Tree>
              {treeRows.map((row, i) => (
                <TreeLine key={i} row={row} id={`node-${i}`} />
              ))}
            </Tree>
            <ScrollTrack>
              <Arrow dir="up" />
              <ScrollGap $size={107} />
              <ScrollThumb $size={238} />
              <ScrollGap $size={184} />
              <Arrow dir="down" />
            </ScrollTrack>
          </TreeArea>
          <ScrollTrack $row>
            <Arrow dir="left" />
            <ScrollThumb $size={199} />
            <ScrollGap $size={23} />
            <Arrow dir="right" />
            <ScrollCorner />
          </ScrollTrack>
          <Dots row />
          <PanelHead $h={27}>
            <PanelTitle>Monitors/Meters</PanelTitle>
            <PopOut color="#fff" />
          </PanelHead>
          <Toolbar>
            {monitorIcons.map(([n, label], i) => (
              <Tool key={n} aria-label={label} $lit={i === 0} $pad={i === 0 ? 4 : 7}>
                <Icon name={n} />
              </Tool>
            ))}
            <Sep />
            <Toggle $on={monitor} aria-label="Monitor" onClick={() => setMonitor(!monitor)}>
              <i />
              <span>{monitor ? "ON" : "OFF"}</span>
            </Toggle>
          </Toolbar>
          <Scope />
        </Side>

        <Dots />

        <Work>
          <PanelHead $left={7}>
            <svg width="9" height="14" viewBox="0 0 9 14">
              <path d="M8 1L2 7l6 6" fill="none" stroke="#fff" strokeWidth="1.800" />
            </svg>
            <PanelTitle>Stepped Frequency Sweep</PanelTitle>
          </PanelHead>
          <Columns>
            <SweepForm />
            <Results>
              <Toolbar $large>
                {["save", "copy", "print"].map((n) => (
                  <Tool key={n} aria-label={n}>
                    <Icon name={n} />
                  </Tool>
                ))}
                <Sep $wide />
                {["zoomIn", "move", "expand"].map((n) => (
                  <Tool key={n} aria-label={n}>
                    <Icon name={n} />
                  </Tool>
                ))}
                <Sep $wide />
                <Tool aria-label="Cursor">
                  <Icon name="cursor" />
                </Tool>
                <Sep $wide />
                <Tool aria-label="Table">
                  <Icon name="table" />
                </Tool>
                <Tool aria-label="Traces" $pad={4}>
                  <Icon name="wave" />
                  <Caret />
                </Tool>
                <Tool aria-label="Functions" $pad={4}>
                  <Icon name="fx" />
                  <Caret />
                </Tool>
                <Tool aria-label="Graph settings">
                  <Icon name="gear" />
                </Tool>
                <Sep $wide />
                <AxisName>X</AxisName>
                <Select label="X unit" value="Hz" width={52} flat />
                <AxisName>&nbsp;Y</AxisName>
                <Select label="Y unit" value="Vrms" width={69} flat />
                <Spacer />
                <EndButton aria-label="Open in window">
                  <PopOut color="#2b4f7d" />
                </EndButton>
              </Toolbar>
              <GraphArea>
                <Graph />
                <Legend>
                  <LegendHead>
                    Data
                    <svg viewBox="0 0 12 8">
                      <path d="M0 4h4M4.500 0v8M5 1.500h6v4H5M5 6.500h6" />
                    </svg>
                  </LegendHead>
                  <LegendRow $color="#12306f">
                    <Tick label="P16A-...噪)" />
                    <i />
                    <b>P16A-...噪)</b>
                  </LegendRow>
                  <LegendRow $color="#7a1450">
                    <Tick label="P16A...噪) 2" />
                    <i />
                    <b>P16A...噪)</b>2
                  </LegendRow>
                </Legend>
              </GraphArea>
              <Toolbar $large>
                <Tool aria-label="First">
                  <Icon name="first" />
                </Tool>
                <Tool aria-label="Last">
                  <Icon name="last" />
                </Tool>
                <Sep />
                <Tool $text $pad={6}>
                  <Icon name="plus" />
                  Add&nbsp;
                  <Caret />
                </Tool>
                <Tool $text $pad={6}>
                  <Icon name="close" />
                  Delete&nbsp;
                  <Caret />
                </Tool>
                <Tool $text>
                  <Icon name="gear" />
                  Details
                </Tool>
                <Spacer />
                <EndButton aria-label="Collapse results">
                  <Dock />
                </EndButton>
              </Toolbar>
              <Strip>
                {thumbs.map((t, i) => (
                  <Thumb key={i} $selected={t.selected}>
                    <ThumbGraph thumb={t} />
                    <span>{t.text}</span>
                  </Thumb>
                ))}
              </Strip>
              <ScrollTrack $row>
                <Arrow dir="left" />
                <ScrollThumb $size={891} />
                <ScrollGap $size={337} />
                <Arrow dir="right" />
              </ScrollTrack>
              <Dots row />
              <Toolbar $large>
                <DataSetsLabel>Data Sets</DataSetsLabel>
                <Sep />
                <TickPair>
                  <Tick label="Select all" blue />
                  <Tick label="Select none" blue initial={false} />
                </TickPair>
                <Sep />
                <Tool $text $pad={6}>
                  <Icon name="clearData" />
                  Clear Data&nbsp;
                  <Caret />
                </Tool>
                <Tool $text $pad={9}>
                  <Icon name="importData" />
                  Import
                </Tool>
                <Tool $text $pad={9}>
                  <Icon name="exportData" />
                  Export
                </Tool>
                <Tool $text>
                  <Icon name="gear" />
                  Data Settings
                </Tool>
                <Spacer />
                <EndButton aria-label="Collapse data sets">
                  <Dock />
                </EndButton>
              </Toolbar>
              <DataArea>
                <DataTable>
                  <colgroup>
                    <col width="23" />
                    <col width="79" />
                    <col width="112" />
                    <col />
                  </colgroup>
                  <thead>
                    <tr>
                      <th aria-label="Shown" />
                      <th>Data Set</th>
                      <th>Time</th>
                      <th>Notes</th>
                    </tr>
                  </thead>
                  <tbody>
                    {["2022/3/4 11:17:23", "2022/3/4 11:19:05"].map((time, i) => (
                      <DataRow key={time} $tint={i === 1}>
                        <td>
                          <Tick label={`Show Measured ${i + 1}`} bold />
                        </td>
                        <td>Measured {i + 1}</td>
                        <td>{time}</td>
                        <td />
                      </DataRow>
                    ))}
                  </tbody>
                </DataTable>
              </DataArea>
            </Results>
          </Columns>
        </Work>
      </Main>

      <StatusBar>
        <StatusLabel>Output:</StatusLabel>
        {["Bluetooth", "rock", "A2DP", "SBC", "44.1000 kHz"].map((t) => (
          <Tag key={t}>{t}</Tag>
        ))}
        <StatusLabel>Input:</StatusLabel>
        {["Analog Balanced 1 Ch, 200 kohm", "320.0 mVrms", "20 Hz - 20 kHz"].map((t) => (
          <Tag key={t}>{t}</Tag>
        ))}
      </StatusBar>

      <Taskbar>
        {tasks.map((t) => (
          <Task key={t.name} aria-label={t.label} $running={t.running} $active={t.active} $w={t.width}>
            {taskIcons[t.name]}
            <i />
          </Task>
        ))}
        <Spacer />
        <Tray>
          <svg width="23" height="20" viewBox="0 0 23 20">
            <path d="M5 19a5 5 0 01-1-9.500C4 4 7 1 11 1c5 0 6 3 7 6 3 1 5 3 4 7-.5 3-2 5-5 5z" fill="#a9d6f5" />
            <path d="M5 11c0-5 3-8 7-8 3 0 4 2 5 4" fill="none" stroke="#e8f5fd" strokeWidth="2" />
          </svg>
          <span>23°C&nbsp; 多云</span>
          <svg width="20" height="8" viewBox="0 0 20 8">
            <path d="M5 7l6-6 6 6" fill="none" stroke="#fff" strokeWidth="1.200" />
          </svg>
          <span>英</span>
          <Clock>
            11:20
            <br />
            2022/3/4
          </Clock>
          <svg width="17" height="18" viewBox="0 0 17 18">
            <path d="M1 1h15v12h-5l-2.500 3L6 13H1z" fill="none" stroke="#fff" strokeWidth="1.300" />
          </svg>
        </Tray>
        <ShowDesktop aria-label="Show desktop" />
      </Taskbar>
    </Page>
  );
}
